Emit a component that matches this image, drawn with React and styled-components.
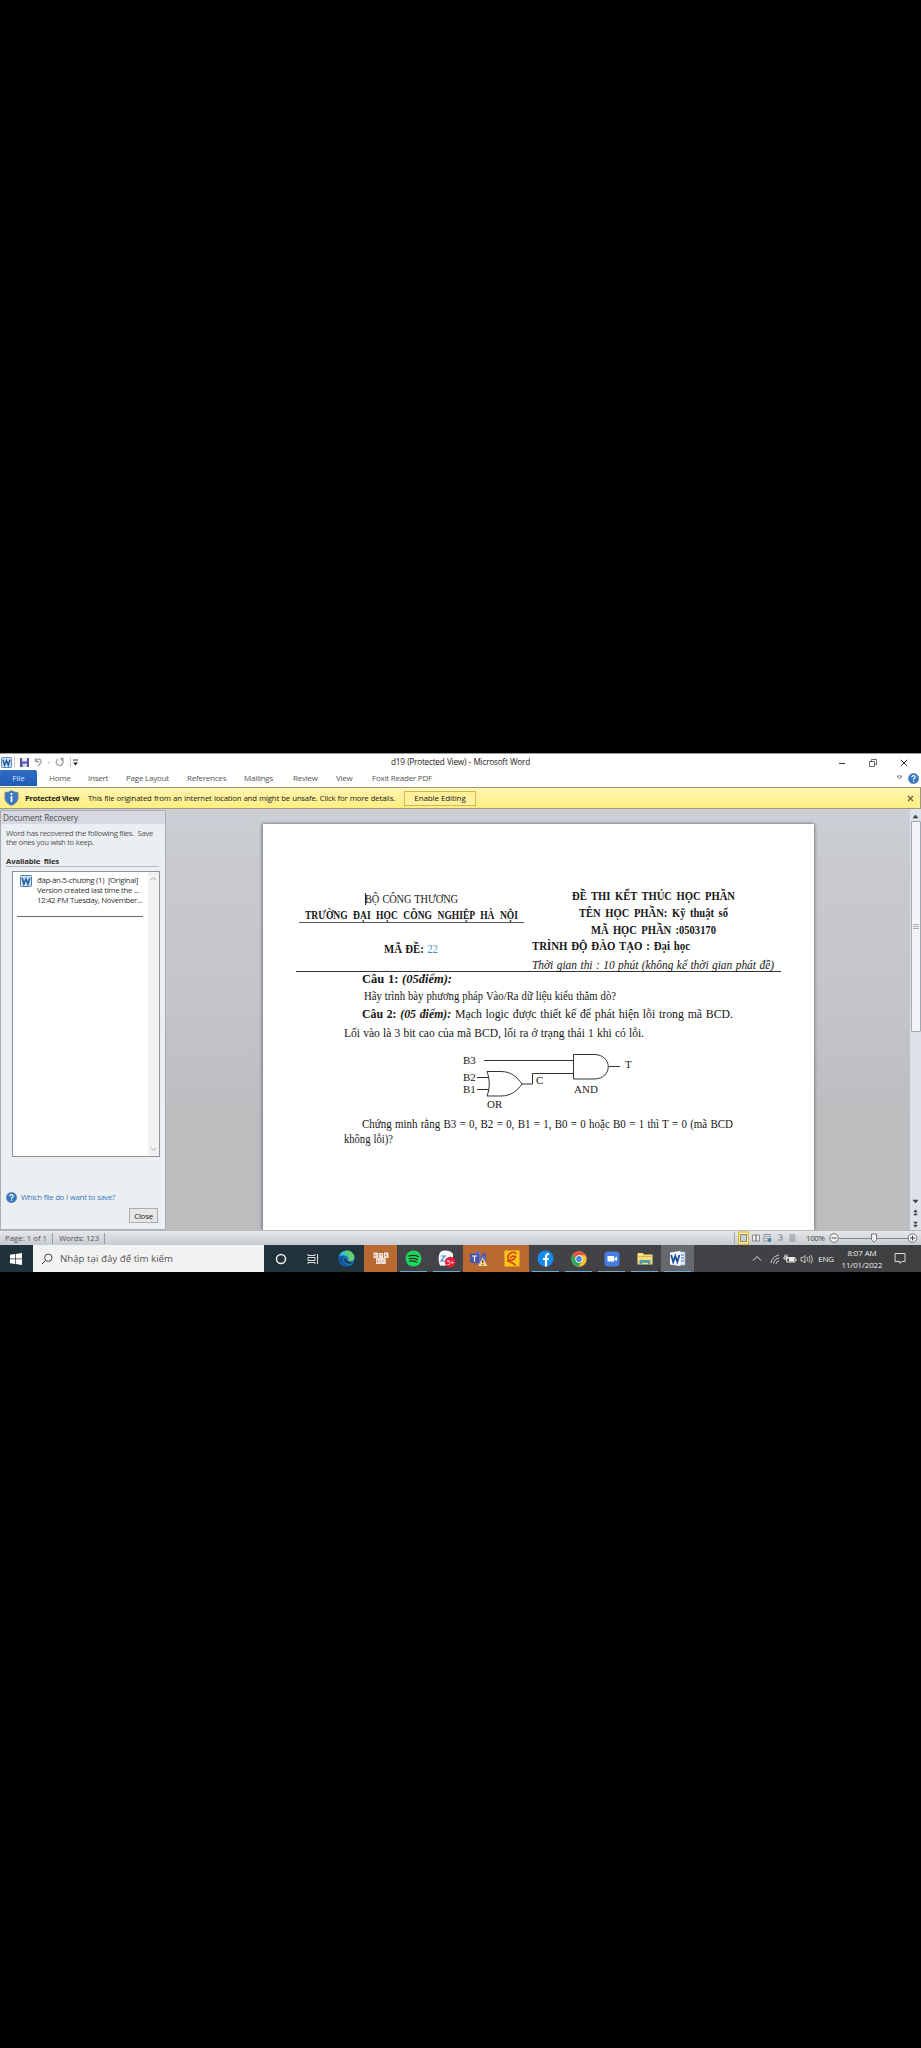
import React from "react";
import styled, { createGlobalStyle, css } from "styled-components";

const Global = createGlobalStyle`
  * { box-sizing: border-box; }
  html, body { margin: 0; background: #000; }
  body { font-family: "Open Sans", "Noto Sans", sans-serif; }
  svg { display: block; flex: none; }
`;

const Screen = styled.div`
  width: 921px;
  height: 2048px;
  padding-top: 753px;
  background: #000;
  overflow: hidden;
`;

const Window = styled.div`
  display: flex;
  flex-direction: column;
  height: 492px;
  background: #fff;
`;

const Label = styled.span`
  display: block;
  flex: none;
  width: ${(p) => (p.$w ? `${p.$w}px` : "auto")};
  margin-left: ${(p) => p.$ml || 0}px;
  font-size: ${(p) => p.$size || 8}px;
  line-height: ${(p) => p.$lh || 10}px;
  font-weight: ${(p) => (p.$bold ? 700 : 400)};
  letter-spacing: ${(p) => p.$ls || 0}px;
  color: ${(p) => p.$color || "#333"};
  text-align-last: ${(p) => (p.$w ? "justify" : "auto")};
  white-space: nowrap;
`;

const TitleBar = styled.div`
  display: flex;
  align-items: center;
  height: 17px;
  padding-left: 1px;
  border-top: 1px solid #999;
`;
const Controls = styled.div`
  display: flex;
  align-items: center;
  justify-content: space-between;
  width: 70px;
  margin-left: 308px;
  padding-top: 2px;
`;

const TabBar = styled.div`
  display: flex;
  align-items: center;
  height: 17px;
  padding-bottom: 1px;
`;
const FileTab = styled.div`
  width: 37px;
  height: 16px;
  border-radius: 1px 2px 0 0;
  background: linear-gradient(#2f6cc4, #1f5cb8);
  color: #d5e4fb;
  font-size: 8px;
  line-height: 15px;
  text-align: center;
`;
const Tab = styled.div`
  width: ${(p) => p.$w}px;
  font-size: 8px;
  line-height: 12px;
  letter-spacing: -0.22px;
  color: #555;
  white-space: nowrap;
`;

const Notice = styled.div`
  display: flex;
  align-items: center;
  height: 22px;
  padding-left: 4px;
  border: solid #a19a78;
  border-width: 1px 1px 1px 0;
  background: linear-gradient(#fff4b0, #ffee80);
`;
const EnableButton = styled.button`
  width: 72px;
  height: 15px;
  margin-left: 9px;
  padding: 0;
  border: 1px solid #cdb85e;
  background: #fff09a;
  font: 8px/12px "Open Sans", sans-serif;
  letter-spacing: -0.1px;
  color: #222;
`;

const Body = styled.div`
  display: flex;
  height: 421px;
  background: linear-gradient(#ccd0d6 0, #c8cacf 12%, #c4c5cb 45%, #bcbdbf 72%, #bcbdbf);
`;

const Pane = styled.aside`
  width: 166px;
  margin-top: 1px;
  border: 1px solid #a8adb3;
  background: #eceff2;
`;
const PaneTitle = styled.div`
  height: 13px;
  padding-left: 2px;
  background: #d6dae0;
`;
const PaneText = styled.div`
  padding: 5px 0 0 5px;
`;
const SectionTitle = styled.div`
  width: 153px;
  margin: 9px 0 4px 5px;
  border-bottom: 1px solid #b3b6bb;
`;
const FileList = styled.div`
  display: flex;
  justify-content: space-between;
  width: 148px;
  height: 286px;
  margin-left: 11px;
  border: 1px solid #8e9196;
  background: #fff;
`;
const FileItem = styled.div`
  display: flex;
  height: 45px;
  width: 126px;
  margin-left: 4px;
  padding: 3px 0 0 3px;
  border-bottom: 1px solid #666;
`;
const FileText = styled.div`
  margin-left: 5px;
`;
const ListScroll = styled.div`
  display: flex;
  flex-direction: column;
  align-items: center;
  justify-content: space-between;
  width: 11px;
  padding: 5px 0;
  background: #f1f1f1;
`;
const HelpRow = styled.div`
  display: flex;
  align-items: center;
  gap: 4px;
  margin: 34px 0 0 5px;
  height: 12px;
`;
const CloseButton = styled.button`
  display: block;
  width: 29px;
  height: 15px;
  margin: 5px 0 0 128px;
  padding: 0;
  border: 1px solid #adadad;
  background: #e6e6e6;
  font: 8px/12px "Open Sans", sans-serif;
  letter-spacing: -0.3px;
  color: #222;
`;

const Page = styled.main`
  width: 551px;
  height: 406px;
  margin: 15px 0 0 97px;
  background: #fff;
  box-shadow: -1px 0 3px #777a80, 1px 0 3px #888b90;
  font-family: "Liberation Serif", serif;
`;
const Header = styled.header`
  display: flex;
  width: 485px;
  height: 148px;
  margin-left: 33px;
  border-bottom: 1px solid #333;
`;
const Column = styled.div`
  flex: none;
  width: ${(p) => p.$w}px;
  padding-top: ${(p) => p.$top}px;
`;
/* $w is the printed width; $condense narrows the letters inside it */
const Line = styled.div`
  width: ${(p) => p.$w / (p.$condense || 1)}px;
  transform: scaleX(${(p) => p.$condense || 1});
  transform-origin: left;
  margin-left: ${(p) => p.$x || 0}px;
  margin-top: ${(p) => p.$mt || 0}px;
  font-size: ${(p) => p.$size || 12}px;
  line-height: 16px;
  font-weight: ${(p) => (p.$bold ? 700 : 400)};
  font-style: ${(p) => (p.$italic ? "italic" : "normal")};
  letter-spacing: ${(p) => p.$ls || 0}px;
  color: #161616;
  text-align-last: justify;
  white-space: nowrap;
`;
const Rule = styled.div`
  width: 225px;
  height: 1px;
  margin-left: 3px;
  margin-top: -1px;
  background: #555;
`;
const Code = styled.span`
  font-weight: 400;
  color: #4593c8;
`;
const Caret = styled.span`
  display: inline-block;
  width: 1px;
  height: 12px;
  margin-right: -1px;
  vertical-align: -2px;
  background: #000;
`;
const Circuit = styled.svg`
  margin: 2px 0 0 197px;
  font-size: 11px;
`;

const ScrollBar = styled.div`
  display: flex;
  flex-direction: column;
  align-items: center;
  width: 11px;
  margin-left: auto;
  padding-top: 5px;
  background: #dde1ea;
`;
const Thumb = styled.div`
  display: flex;
  align-items: center;
  justify-content: center;
  width: 10px;
  height: 211px;
  margin: 2px 0 167px;
  border: 1px solid #a2a8b2;
  border-radius: 1px;
  background: #f3f5f8;
`;

const StatusBar = styled.footer`
  display: flex;
  align-items: center;
  height: 15px;
  padding-left: 5px;
  border-top: 1px solid #b6b8bb;
  background: linear-gradient(#e6e8ea, #c6cbd1);
`;
const Divider = styled.i`
  width: 1px;
  height: 11px;
  margin: 0 6px;
  background: #999da3;
`;
const StatusRight = styled.div`
  display: flex;
  align-items: center;
  margin-left: auto;
  padding-right: 3px;
`;

const Taskbar = styled.nav`
  display: flex;
  height: 27px;
  background: linear-gradient(90deg, #20323a 0, #22333b 396px, #434447 398px, #424246 700px, #3e3f41);
`;
const SearchBox = styled.div`
  display: flex;
  align-items: center;
  gap: 7px;
  width: 231px;
  padding-left: 8px;
  background: #f2f2f2;
`;
const TaskButton = styled.div`
  display: flex;
  align-items: center;
  justify-content: center;
  width: ${(p) => p.$w || 33}px;
  ${(p) => p.$alert && css`background: #b96a30;`}
  ${(p) => p.$active && css`background: #66696d;`}
  ${(p) =>
    p.$open &&
    css`
      background-image: linear-gradient(#76a9cc, #76a9cc);
      background-size: 27px 1px;
      background-position: center bottom;
      background-repeat: no-repeat;
    `}
`;
const Start = styled(TaskButton)`
  padding-right: 1px;
  background: #20323a;
`;
const Tray = styled.div`
  display: flex;
  align-items: center;
  margin-left: auto;
  padding-right: 15px;
`;
const Clock = styled.div`
  width: 42px;
  margin: 0 11px 0 7px;
  color: #eee;
  font-size: 7.9px;
  line-height: 12px;
  letter-spacing: -0.1px;
  text-align: center;
  white-space: nowrap;
`;

const Stroke = ({ w, h, d, c = "#333", sw = 1, fill = "none" }) => (
  <svg width={w} height={h} viewBox={`0 0 ${w} ${h}`}>
    <path d={d} stroke={c} strokeWidth={sw} fill={fill} />
  </svg>
);

const WordFile = ({ s = 12 }) => (
  <svg width={s} height={s} viewBox="0 0 12 12">
    <rect x=".5" y=".5" width="11" height="11" rx="1" fill="#c9def2" stroke="#4a7fb9" />
    <path d="M2.2 3 3.9 9 6 4 8 9 9.8 3" fill="none" stroke="#1b579f" strokeWidth="1.5" />
  </svg>
);

const HelpIcon = () => (
  <svg width="11" height="11" viewBox="0 0 11 11">
    <circle cx="5.5" cy="5.5" r="5.2" fill="#3c78bd" stroke="#6791bd" strokeWidth=".6" />
    <path d="M3.8 4.3C3.8 2 7.3 2.1 7.2 4.1 7.1 5.3 5.5 5.2 5.5 6.7M5.5 7.6V8.8" fill="none" stroke="#fff" strokeWidth="1.1" />
  </svg>
);

const ShieldIcon = () => (
  <svg width="15" height="16" viewBox="0 0 15 16">
    <path d="M7.5.5C5.5 2 3.5 2.4 1 2.4V8C1 11.5 4 14 7.5 15.4 11 14 14 11.5 14 8V2.4C11.5 2.4 9.5 2 7.5.5Z" fill="#3b7ac2" stroke="#75879b" />
    <path d="M7.5 3V5M7.5 6V12" stroke="#fff" strokeWidth="1.7" />
  </svg>
);

const QuickAccess = () => (
  <svg width="69" height="15" viewBox="12 0 69 15">
    <path d="M14.5 2V12M70.5 2V12" stroke="#aaa" strokeWidth=".7" />
    <path d="M20 3H29V12H20Z" fill="#4f55a0" />
    <path d="M22 3H27V6.5H22Z" fill="#e5e8fb" />
    <path d="M22.5 8.5H27V12H22.5Z" fill="#d1d5eb" />
    <path d="M35.5 3V6.7H39.4M35.7 6.5C37 3 41.5 3.4 41 6.8 40.8 8.6 39.5 9.7 38 11" fill="none" stroke="#9a9da1" strokeWidth="1.3" />
    <path d="M47.5 7H50L48.8 8.5Z" fill="#aaa" />
    <path d="M58 4C54.5 7 57 10.8 60 10.5 63.5 10.2 64 5.5 61 4M60 3.5H63V6.5" fill="none" stroke="#a5a7aa" strokeWidth="1.4" />
    <path d="M73 5H78" stroke="#333" strokeWidth="1" />
    <path d="M73 7.5H78L75.5 10.5Z" fill="#222" />
  </svg>
);

const Gates = () => (
  <Circuit width="180" height="65" viewBox="0 0 180 65">
    <g fill="none" stroke="#333" strokeWidth="1">
      <path d="M24 17.5H113.5M113.5 11.5H134C153 11.5 153 36 134 36H113.5ZM149 23.5H160" />
      <path d="M27 28.5H41C51 28.5 57 34 62 41 57 48 51 53 41 53H27C30 45 30 37 27 28.5ZM17 34.5H29M17 46.5H29M62 41H72.5V30.5H113.5" />
    </g>
    <g fill="#222">
      <text x="3" y="21">B3</text>
      <text x="3" y="38">B2</text>
      <text x="3" y="50">B1</text>
      <text x="76" y="41">C</text>
      <text x="165" y="25">T</text>
      <text x="27" y="65">OR</text>
      <text x="114" y="50">AND</text>
    </g>
  </Circuit>
);

const ViewIcons = () => (
  <svg width="66" height="14" viewBox="0 0 66 14">
    <path d="M1.5 1V13" stroke="#aaa" />
    <rect x="5.5" y="1" width="10" height="12" fill="#fff0a0" stroke="#e0b528" />
    <rect x="7.5" y="3.5" width="6" height="7" fill="#eee" stroke="#888" />
    <path d="M8 5H13M8 7H13M8 9H13" stroke="#888" strokeWidth=".6" />
    <path d="M19.5 4H23V10H19.5ZM23 4H26.5V10H23Z" fill="#eee" stroke="#777" strokeWidth=".8" />
    <path d="M31 3.5H37V10H31ZM32 5.5H36M32 7.5H35" fill="#eee" stroke="#777" strokeWidth=".8" />
    <circle cx="36.5" cy="9" r="2" fill="#4b83aa" />
    <path d="M45 4H49M46.5 6.5H49M45 9H49M49 4V9.5M56.5 4H62.5M56.5 6H62.5M56.5 8H62.5M56.5 10H62.5" stroke="#777" strokeWidth=".8" />
  </svg>
);

const Zoom = () => (
  <svg width="89" height="14" viewBox="0 0 89 14">
    <path d="M10 7.5H79" stroke="#858a91" />
    <g fill="#f2f3f4" stroke="#777">
      <circle cx="5" cy="7" r="4.3" />
      <circle cx="83.5" cy="7" r="4.3" />
      <path d="M42.5 3H47.5V9L45 11 42.5 9Z" />
    </g>
    <path d="M2.5 7H7.5M81 7H86M83.5 4.5V9.5" stroke="#444" />
  </svg>
);

const WindowsLogo = () => (
  <svg width="12" height="12" viewBox="0 0 12 12">
    <path d="M0 1.7 5 1V5.6H0ZM5.7.9 12 0V5.6H5.7ZM0 6.3H5V11L0 10.3ZM5.7 6.3H12V12L5.7 11.1Z" fill="#fff" />
  </svg>
);
const TaskView = () => (
  <svg width="12" height="12" viewBox="0 0 12 12">
    <path d="M1 1V2.5H8V1M1 11V9.5H8V11M1 4.5H8V7.5H1ZM10.5 1V11M9.8 4.5H11.3" fill="none" stroke="#ddd" />
  </svg>
);
const Edge = () => (
  <svg width="17" height="17" viewBox="0 0 17 17">
    <circle cx="8.5" cy="8.5" r="8" fill="#1778c2" />
    <path d="M1 6C4-1.5 14-.5 16.3 6 17 10 13.5 12 10.5 10.5 11.5 9 10 6 6.5 5.5 4 5 2 5.5 1 6Z" fill="#37bfc3" />
    <path d="M8 .6C13 .2 16 4 16.3 7 16.4 10.5 13 12 10.5 10.5 12 7 10 4 7 3Z" fill="#67cf68" />
    <path d="M6 7C3.5 10 6 15 12 15.5 6 18 .5 13 .8 8.5 2 5.5 5 5.5 6 7Z" fill="#1354a2" />
    <path d="M8 7.5C7 10 9 12.5 15 12.5 13 15 6 13.5 6 9.5Z" fill="#22333b" />
  </svg>
);
const Blocks = () => (
  <svg width="16" height="13" viewBox="0 0 16 13">
    <path d="M.5.5H5V6H.5ZM5.7 1H10.2V6.5H5.7ZM11 .5H15.5V6H11ZM3 6.3H7.7V12H3ZM8.1 6.3H12.8V12H8.1Z" fill="#f3e5dd" />
    <path d="M2 2V4H3.5M7 3H9M12.5 2V4H14M4.5 8V10H6M9.5 9H11.5" fill="none" stroke="#b4776f" strokeWidth=".8" />
  </svg>
);
const Spotify = () => (
  <svg width="17" height="17" viewBox="0 0 17 17">
    <circle cx="8.5" cy="8.5" r="8" fill="#1fd45f" />
    <path d="M3.7 6C7 5 10.5 5.2 13.5 6.7M4.3 8.8C7 8 10 8.2 12.5 9.6M4.9 11.3C7 10.7 9.5 11 11.5 12" fill="none" stroke="#17351f" strokeWidth="1.3" strokeLinecap="round" />
  </svg>
);
const Zalo = () => (
  <svg width="19" height="18" viewBox="0 0 19 18">
    <path d="M4 1.5C7-.3 14 0 16 4V12C13 16 7 16 3 15.5 1 11 1 4 4 1.5Z" fill="#f4f8fd" />
    <path d="M4 6H8L4 11H8" fill="none" stroke="#4284c7" strokeWidth="1.2" />
    <circle cx="13.2" cy="12" r="5.3" fill="#e51c35" />
    <text x="9.7" y="14.5" fill="#fff" fontSize="6.5">5+</text>
  </svg>
);
const Teams = () => (
  <svg width="18" height="17" viewBox="0 0 18 17">
    <circle cx="8" cy="3.3" r="2.3" fill="#6d70ce" />
    <circle cx="14" cy="5" r="2" fill="#5559ac" />
    <path d="M6 6H16V13L12 15H7Z" fill="#6366bb" />
    <rect y="3.5" width="9" height="9.5" rx="1" fill="#4b53aa" />
    <path d="M2 6H7M4.5 6V11.5" stroke="#fff" strokeWidth="1.2" />
    <path d="M12.7 7.5 17.5 16H8Z" fill="#f3d68a" />
    <path d="M12.7 10V13M12.7 14V15" stroke="#333" />
  </svg>
);
const YellowApp = () => (
  <svg width="16" height="17" viewBox="0 0 16 17">
    <rect x=".5" y=".5" width="15" height="16" fill="#fbc51a" />
    <path d="M12.5 4C9 0 3.5 4 4 8 4.5 12 10.5 10.5 11.5 6.5 9 5.5 6.5 6.5 6.5 8.5M3 10.5C6 12 8 12 12 15.5" fill="none" stroke="#d64018" strokeWidth="1.5" />
  </svg>
);
const Facebook = () => (
  <svg width="17" height="17" viewBox="0 0 17 17">
    <circle cx="8.5" cy="8.5" r="8" fill="#168bec" />
    <path d="M9 16.5V6.5C9 4.5 10 4 12 4.3M6 9H11.7" fill="none" stroke="#fff" strokeWidth="2.2" />
  </svg>
);
const Chrome = () => (
  <svg width="16" height="16" viewBox="0 0 16 16">
    <circle cx="8" cy="8" r="7.7" fill="#f7c534" />
    <path d="M8 8 1.3 4.1A7.7 7.7 0 0 1 14.7 4.3H8Z" fill="#de5346" />
    <path d="M8 8 1.3 4.1A7.7 7.7 0 0 0 7.5 15.7L11 10Z" fill="#35a15c" />
    <circle cx="8" cy="8" r="3.7" fill="#fff" />
    <circle cx="8" cy="8" r="2.9" fill="#4c87dc" />
  </svg>
);
const ZoomApp = () => (
  <svg width="16" height="16" viewBox="0 0 16 16">
    <rect x=".5" y=".5" width="15" height="15" rx="3.5" fill="#477de2" />
    <path d="M3.5 5H9C10 5 10.3 5.5 10.3 6.3V10.5H5C4 10.5 3.5 10 3.5 9ZM11 7 13 5.5V10L11 9Z" fill="#fff" />
  </svg>
);
const Explorer = () => (
  <svg width="16" height="14" viewBox="0 0 16 14">
    <path d="M.5 1H6L7 2.5H15.5V12.5H.5Z" fill="#f8df7c" />
    <path d="M.5 4.5H15.5" stroke="#dfb64e" />
    <path d="M2.5 8H13.5V13H11V11H5V13H2.5Z" fill="#569dac" />
  </svg>
);
const WordApp = () => (
  <svg width="16" height="15" viewBox="0 0 16 15">
    <path d="M6 1H15V14H6Z" fill="#e3edf8" stroke="#8fb4dd" strokeWidth=".7" />
    <path d="M11 4H14M11 7H14M11 10H14" stroke="#4177b5" />
    <path d="M0 1.5 10.5 0V15L0 13.5Z" fill="#f4f8fd" />
    <path d="M1.2 4 3.2 11 5.3 5 7.3 11 9.4 4" fill="none" stroke="#164b9a" strokeWidth="1.7" />
  </svg>
);

const TrayIcons = () => (
  <svg width="62" height="14" viewBox="0 0 62 14">
    <g fill="none" stroke="#e1e1e1">
      <path d="M1 8.5 5 4.5 9 8.5" />
      <path d="M19 11C19 8 22 4 27 3M21.5 11.5C21.5 9 24 6.5 27 6M24 12C24 10.5 25.5 9 27 9" strokeWidth=".9" />
      <path d="M34.5 5.5H43V10H34.5ZM44 6.5V9M33 2.5V5M35 2.5V5M32 5H36V7H32Z" />
      <path d="M49 5.5H51L53 3.5V11L51 9H49ZM55 5Q56.5 7.3 55 9.5M57 4Q59 7.3 57 10.5M59 3Q62 7.3 59 11.5" strokeWidth=".8" />
    </g>
    <rect x="37" y="6" width="5" height="3.5" fill="#eee" />
  </svg>
);

const tabs = [
  ["Home", 39],
  ["Insert", 38],
  ["Page Layout", 61],
  ["References", 57],
  ["Mailings", 49],
  ["Review", 43],
  ["View", 36],
  ["Foxit Reader PDF", 70],
];

export default function App() {
  return (
    <Screen>
      <Global />
      <Window>
        <TitleBar>
          <WordFile s={11} />
          <QuickAccess />
          <Label $ml={310} $w={139} $size={8.2} $ls={-0.22} $color="#222">d19 (Protected View) - Microsoft Word</Label>
          <Controls>
            <Stroke w={8} h={10} d="M1 5.5H7" />
            <Stroke w={8} h={10} d="M.5 3.5H5.5V8.5H.5ZM2.5 3.5V1.5H7.5V6.5H5.5" c="#444" sw={0.8} />
            <Stroke w={8} h={10} d="M.8 1.8 7.2 8.2M7.2 1.8.8 8.2" />
          </Controls>
        </TitleBar>
        <TabBar>
          <FileTab>File</FileTab>
          <Label $ml={12} />
          {tabs.map(([t, w]) => <Tab key={t} $w={w}>{t}</Tab>)}
          <Label $ml={454} />
          <Stroke w={7} h={6} d="M1 1H6L3.5 4Z" c="#666" sw={0.8} />
          <Label $ml={5} />
          <HelpIcon />
        </TabBar>
        <Notice>
          <ShieldIcon />
          <Label $ml={6} $w={52} $size={7.7} $bold $ls={-0.3} $color="#222">Protected View</Label>
          <Label $ml={11} $w={307} $size={7.8} $ls={-0.2} $color="#222">
            This file originated from an Internet location and might be unsafe. Click for more details.
          </Label>
          <EnableButton>Enable Editing</EnableButton>
          <Label $ml={431} />
          <Stroke w={7} h={7} d="M1 1 6 6M6 1 1 6" c="#6b6440" sw={1.3} />
        </Notice>
        <Body>
          <Pane>
            <PaneTitle><Label $w={72} $size={8.2} $lh={13} $ls={-0.1} $color="#4a4d52">Document Recovery</Label></PaneTitle>
            <PaneText>
              <Label $w={147} $size={7.8} $lh={9} $ls={-0.35} $color="#555">Word has recovered the following files.&nbsp; Save</Label>
              <Label $w={86} $size={7.8} $lh={9} $ls={-0.35} $color="#555">the ones you wish to keep.</Label>
            </PaneText>
            <SectionTitle><Label $w={53} $size={7.8} $bold $ls={-0.2}>Available files</Label></SectionTitle>
            <FileList>
              <FileItem>
                <WordFile />
                <FileText>
                  <Label $w={101} $size={7.8} $ls={-0.35}>đáp-án-5-chương (1)&nbsp; [Original]</Label>
                  <Label $w={102} $size={7.8} $ls={-0.32}>Version created last time the ...</Label>
                  <Label $w={105} $size={7.8} $ls={-0.35}>12:42 PM Tuesday, November...</Label>
                </FileText>
              </FileItem>
              <ListScroll>
                <Stroke w={7} h={4} d="M1 3 3.5.8 6 3" c="#aaa" />
                <Stroke w={7} h={4} d="M1 1 3.5 3.2 6 1" c="#aaa" />
              </ListScroll>
            </FileList>
            <HelpRow>
              <HelpIcon />
              <Label $w={94} $size={7.8} $ls={-0.36} $color="#3b78bd">Which file do I want to save?</Label>
            </HelpRow>
            <CloseButton>Close</CloseButton>
          </Pane>
          <Page>
            <Header>
              <Column $w={236} $top={67}>
                <Line $x={69} $w={93} $ls={-0.1} $condense={0.86}><Caret />BỘ CÔNG THƯƠNG</Line>
                <Line $x={9} $w={213} $size={11.8} $bold $condense={0.81}>TRƯỜNG ĐẠI HỌC CÔNG NGHIỆP HÀ NỘI</Line>
                <Rule />
                <Line $x={88} $w={54} $mt={18} $bold $condense={0.9}>MÃ ĐỀ: <Code>22</Code></Line>
              </Column>
              <Column $w={249} $top={64}>
                <Line $x={40} $w={163} $bold $condense={0.88}>ĐỀ THI KẾT THÚC HỌC PHẦN</Line>
                <Line $x={47} $w={149} $mt={1} $bold $condense={0.88}>TÊN HỌC PHẦN: Kỹ thuật số</Line>
                <Line $x={59} $w={125} $mt={1} $bold $condense={0.88}>MÃ HỌC PHẦN :0503170</Line>
                <Line $w={158} $bold $condense={0.9}>TRÌNH ĐỘ ĐÀO TẠO : Đại học</Line>
                <Line $w={242} $mt={3} $italic $condense={0.95}>Thời gian thi : 10 phút (không kể thời gian phát đề)</Line>
              </Column>
            </Header>
            <Line $x={99} $w={90} $mt={-1} $size={12.5}><b>Câu 1: <i>(05điểm):</i></b></Line>
            <Line $x={101} $w={252} $mt={1} $size={11.5} $condense={0.93}>Hãy trình bày phương pháp Vào/Ra dữ liệu kiểu thăm dò?</Line>
            <Line $x={99} $w={371} $mt={2} $size={12.3} $condense={0.96}><b>Câu 2: <i>(05 điểm):</i></b> Mạch logic được thiết kế để phát hiện lỗi trong mã BCD.</Line>
            <Line $x={81} $w={300} $mt={3} $condense={0.96}>Lối vào là 3 bit cao của mã BCD, lối ra ở trạng thái 1 khi có lỗi.</Line>
            <Gates />
            <Line $x={99} $w={371} $mt={8} $size={11.5} $condense={0.95}>Chứng minh rằng B3 = 0, B2 = 0, B1 = 1, B0 = 0 hoặc B0 = 1 thì T = 0 (mã BCD</Line>
            <Line $x={81} $w={49} $mt={-1} $size={11.5} $condense={0.92}>không lỗi)?</Line>
          </Page>
          <ScrollBar>
            <Stroke w={7} h={5} d="M1 4H6L3.5 1Z" sw={0.5} fill="#444" />
            <Thumb><Stroke w={6} h={6} d="M0 .5H6M0 2.5H6M0 4.5H6" c="#999" sw={0.8} /></Thumb>
            <Stroke w={7} h={5} d="M1 1H6L3.5 4Z" sw={0.5} fill="#444" />
            <Label $lh={5}>&nbsp;</Label>
            <Stroke w={5} h={7} d="M.8 3 2.5.8 4.2 3ZM.8 6 2.5 4 4.2 6Z" sw={0.5} fill="#444" />
            <Label $lh={5}>&nbsp;</Label>
            <Stroke w={5} h={7} d="M.8 1 2.5 3 4.2 1ZM.8 4 2.5 6.2 4.2 4Z" sw={0.5} fill="#444" />
          </ScrollBar>
        </Body>
        <StatusBar>
          <Label $w={41} $size={7.8} $color="#555">Page: 1 of 1</Label>
          <Divider />
          <Label $w={39} $size={7.8} $ls={-0.1} $color="#555">Words: 123</Label>
          <Divider />
          <StatusRight>
            <ViewIcons />
            <Label $ml={7} $w={18} $size={7.8} $ls={-0.3} $color="#444">100%</Label>
            <Label $ml={5} />
            <Zoom />
          </StatusRight>
        </StatusBar>
      </Window>
      <Taskbar>
        <Start><WindowsLogo /></Start>
        <SearchBox>
          <svg width="12" height="12" viewBox="0 0 12 12">
            <circle cx="7.3" cy="4.7" r="3.7" fill="none" stroke="#444" />
            <path d="M4.5 7.4.8 11.2" stroke="#444" />
          </svg>
          <Label $w={113} $size={9.7} $lh={14} $color="#555">Nhập tại đây để tìm kiếm</Label>
        </SearchBox>
        <TaskButton><svg width="12" height="12" viewBox="0 0 12 12"><circle cx="6" cy="6" r="4.5" fill="none" stroke="#f1f1f1" strokeWidth="1.5" /></svg></TaskButton>
        <TaskButton $w={32}><TaskView /></TaskButton>
        <TaskButton $w={35}><Edge /></TaskButton>
        <TaskButton $alert><Blocks /></TaskButton>
        <TaskButton $open><Spotify /></TaskButton>
        <TaskButton $open><Zalo /></TaskButton>
        <TaskButton $alert $w={32}><Teams /></TaskButton>
        <TaskButton $alert $w={34}><YellowApp /></TaskButton>
        <TaskButton $open><Facebook /></TaskButton>
        <TaskButton $open><Chrome /></TaskButton>
        <TaskButton $open><ZoomApp /></TaskButton>
        <TaskButton $open><Explorer /></TaskButton>
        <TaskButton $open $active><WordApp /></TaskButton>
        <Tray>
          <TrayIcons />
          <Label $ml={4} $size={7.9} $ls={-0.1} $color="#eee">ENG</Label>
          <Clock>8:07 AM<br />11/01/2022</Clock>
          <Stroke w={12} h={13} d="M1 1.5H11V9.5H8L6 11.5V9.5H1Z" c="#ddd" />
        </Tray>
      </Taskbar>
    </Screen>
  );
}
